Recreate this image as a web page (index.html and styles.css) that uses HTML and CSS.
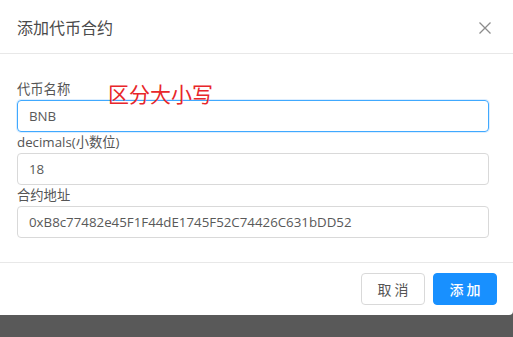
FILE: index.html
```html
<!DOCTYPE html>
<html lang="zh">
<head>
<meta charset="utf-8">
<link rel="stylesheet" href="styles.css">
</head>
<body>
<div class="page">
  <div class="modal">
    <div class="modal-header">
      <span class="modal-title">添加代币合约</span>
      <span class="close">
        <svg width="12" height="12" viewBox="0 0 12 12"><path d="M0.5 0.5 L11.5 11.5 M11.5 0.5 L0.5 11.5" stroke="#8c8c8c" stroke-width="1.3" fill="none"/></svg>
      </span>
    </div>
    <div class="modal-body">
      <div class="field">
        <div class="label">代币名称</div>
        <div class="input focused">BNB</div>
        <span class="hint">区分大小写</span>
      </div>
      <div class="field">
        <div class="label">decimals(小数位)</div>
        <div class="input">18</div>
      </div>
      <div class="field">
        <div class="label">合约地址</div>
        <div class="input">0xB8c77482e45F1F44dE1745F52C74426C631bDD52</div>
      </div>
    </div>
    <div class="modal-footer">
      <button class="btn btn-default">取 消</button>
      <button class="btn btn-primary">添 加</button>
    </div>
  </div>
</div>
</body>
</html>
```

FILE: styles.css
```css
html, body {
  margin: 0;
  padding: 0;
  background: #595959;
  width: 513px;
  height: 337px;
  overflow: hidden;
}
body {
  font-family: "Open Sans", "Noto Sans CJK SC", sans-serif;
  font-size: 13.3px;
  color: #555;
}
.page {
  width: 513px;
  height: 337px;
}
.modal {
  background: #fff;
  width: 513px;
  border-radius: 0 0 4px 0;
}
.modal-header {
  height: 53px;
  border-bottom: 1px solid #e8e8e8;
  display: flex;
  align-items: center;
  justify-content: space-between;
  padding: 0 22px 0 17px;
  box-sizing: content-box;
}
.modal-title {
  font-family: "Noto Sans CJK SC", sans-serif;
  font-size: 16px;
  color: #4a4a4a;
  line-height: 22px;
  margin-top: 1px;
}
.close {
  display: flex;
  width: 12px;
  height: 12px;
  margin-top: 2px;
}
.modal-body {
  padding: 25px 24px 24px 17px;
}
.field {
  position: relative;
}
.label {
  height: 21px;
  line-height: 21px;
  font-size: 13.3px;
  color: #555;
}
.input {
  height: 32px;
  box-sizing: border-box;
  border: 1px solid #d9d9d9;
  border-radius: 4px;
  padding: 0 11px;
  line-height: 30px;
  font-size: 13.3px;
  color: #595959;
}
.input.focused {
  border-color: #40a9ff;
  box-shadow: 0 0 0 1px rgba(24, 144, 255, 0.15);
}
.hint {
  position: absolute;
  left: 91px;
  top: 1px;
  font-family: "Noto Sans CJK SC", sans-serif;
  font-size: 21px;
  line-height: 26px;
  color: #e8262a;
}
.modal-footer {
  border-top: 1px solid #e8e8e8;
  padding: 10px 16px;
  display: flex;
  justify-content: flex-end;
  gap: 8px;
}
.btn {
  width: 64px;
  height: 32px;
  border-radius: 4px;
  font-family: "Noto Sans CJK SC", sans-serif;
  font-size: 14px;
  padding: 0;
  cursor: pointer;
}
.btn-default {
  background: #fff;
  border: 1px solid #d9d9d9;
  color: #555;
}
.btn-primary {
  background: #1890ff;
  border: 1px solid #1890ff;
  color: #fff;
  font-weight: 500;
}
```
